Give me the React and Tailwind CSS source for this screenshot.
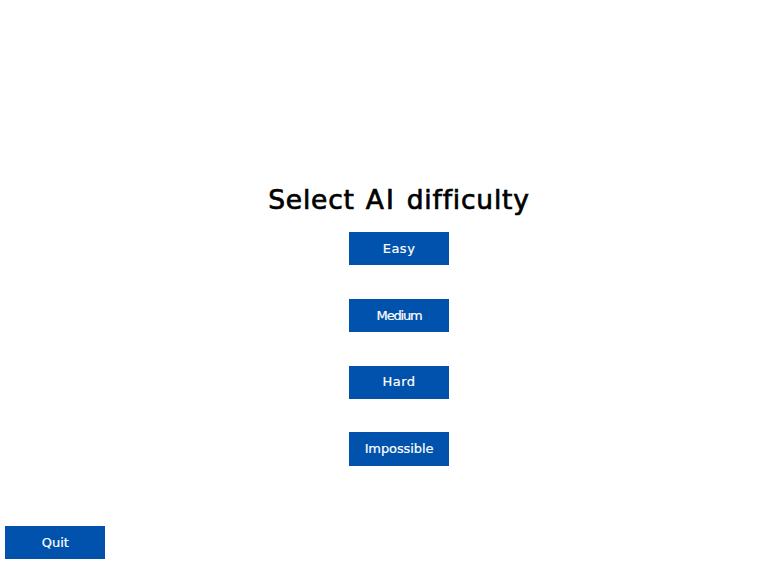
const LEVELS = [
  { label: 'Easy', text: 'tracking-[0.5px]' },
  { label: 'Medium', text: 'tracking-[-1.2px]' },
  { label: 'Hard', text: 'tracking-[0.5px]' },
  { label: 'Impossible', text: 'tracking-[-0.1px]' },
];

function MenuButton({ label, text }) {
  return (
    <button className="flex h-[33.3px] w-[100px] shrink-0 items-center justify-center bg-[#0052ac] pb-px text-[13px] leading-none text-white [-webkit-text-stroke:0.2px_white]">
      <span className={text}>{label}</span>
    </button>
  );
}

export default function App() {
  return (
    <main className="flex h-[561px] w-[781px] flex-col overflow-hidden bg-white font-['DejaVu_Sans',sans-serif]">
      <div className="flex w-full flex-col items-center pt-[184px] pl-[17px]">
        <h1 className="flex h-8 items-center gap-[11px] text-[26.5px] leading-none whitespace-nowrap text-black [-webkit-text-stroke:0.7px_black]">
          <span className="tracking-[0.8px]">Select</span>
          <span className="tracking-[2px]">AI</span>
          <span className="tracking-[0.8px]">difficulty</span>
        </h1>
        <div className="mt-[16.2px] flex flex-col gap-[33.4px]">
          {LEVELS.map((level) => (
            <MenuButton key={level.label} {...level} />
          ))}
        </div>
      </div>
      <div className="mt-[60.4px] pl-[5.3px]">
        <MenuButton label="Quit" text="tracking-[0px]" />
      </div>
    </main>
  );
}
